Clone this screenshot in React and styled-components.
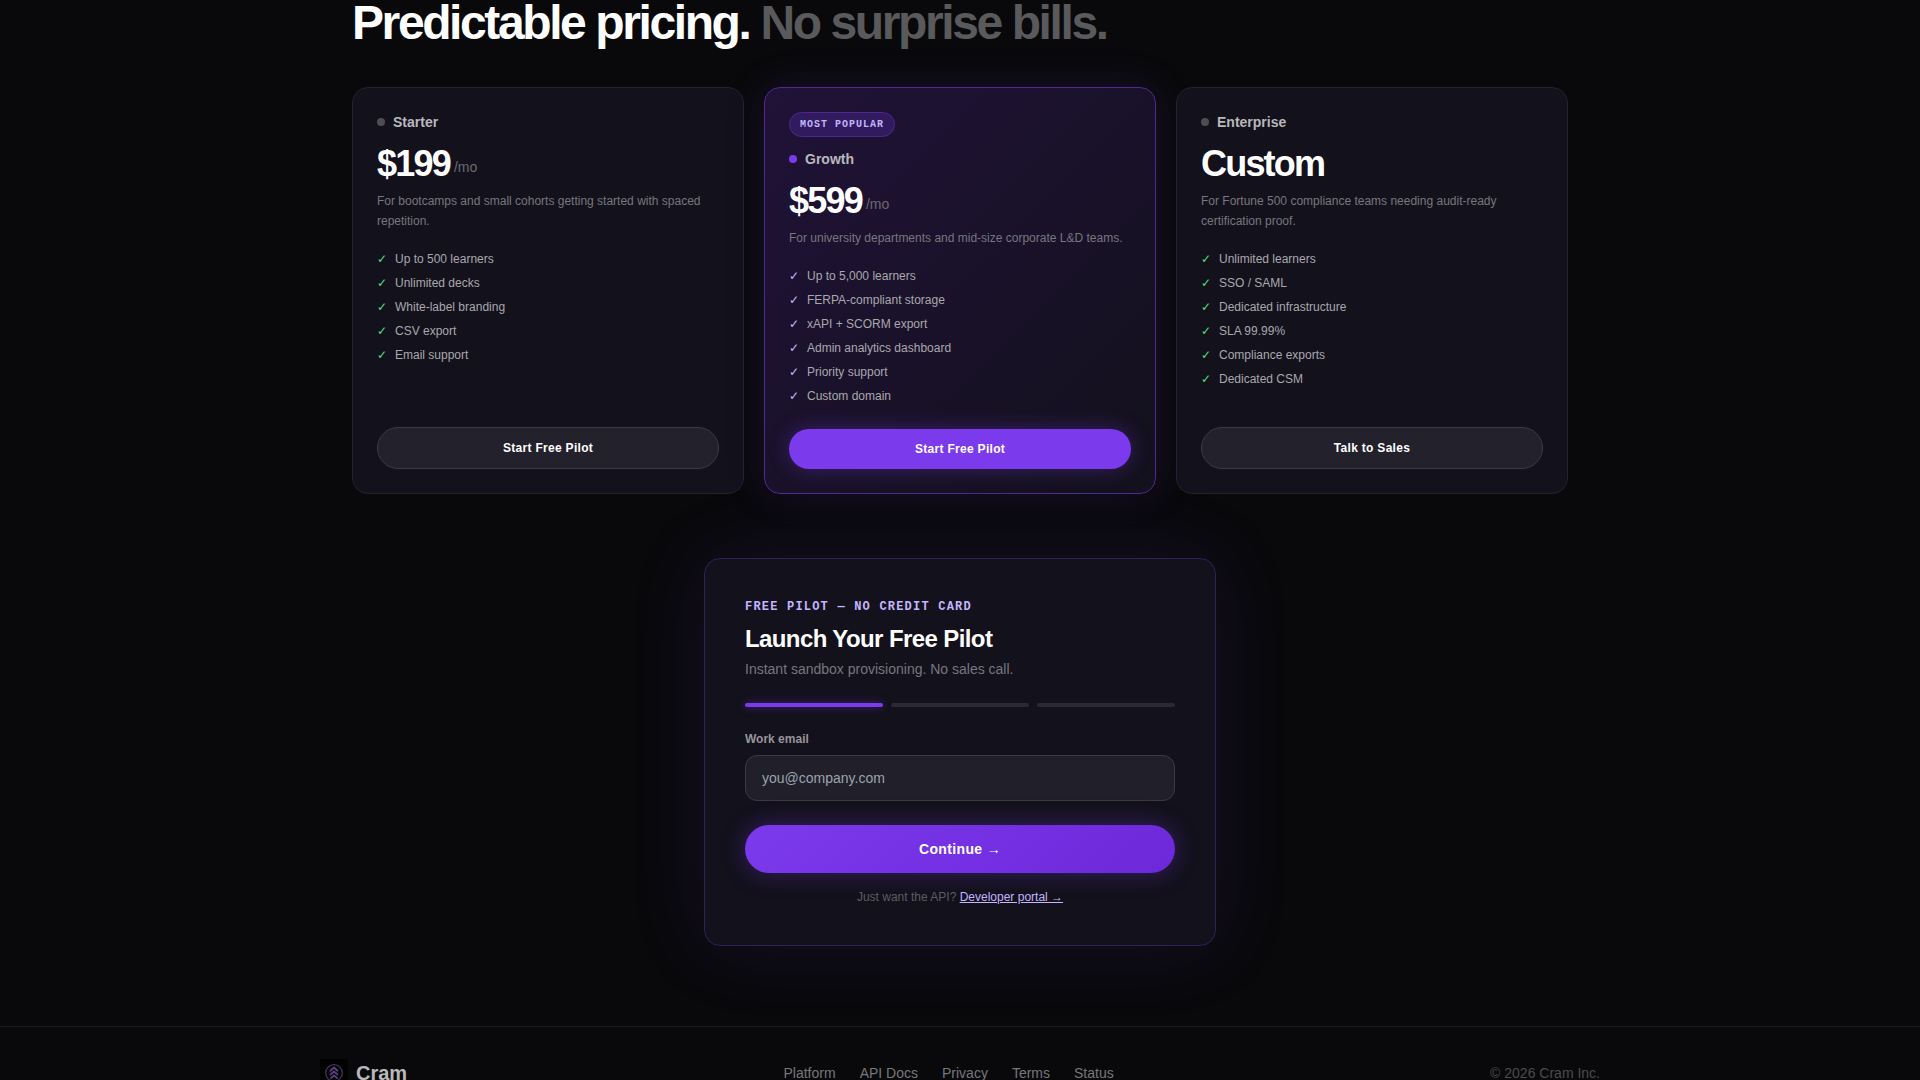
import React, { useState } from "react";
import styled, { createGlobalStyle } from "styled-components";

const GlobalStyle = createGlobalStyle`
  *, *::before, *::after {
    box-sizing: border-box;
  }

  html {
    scrollbar-width: none;
  }

  body {
    margin: 0;
    background: #09090b;
    color: #fff;
    font-family: "Liberation Sans", Arial, sans-serif;
    font-size: 14px;
    line-height: 1.5;
  }

  h1, h2, h3, p, ul {
    margin: 0;
    padding: 0;
  }
`;

// Pricing section
const PricingSection = styled.section`
  max-width: 1280px;
  margin: 0 auto;
  padding: 0 32px;
`;

const Heading = styled.h1`
  margin-bottom: 41px;
  font-size: 48px;
  font-weight: 700;
  line-height: 46px;
  letter-spacing: -0.05em;
`;

const Muted = styled.span`
  color: #5a5a5c;
`;

const PlanGrid = styled.div`
  display: grid;
  grid-template-columns: repeat(3, 1fr);
  gap: 20px;
`;

const PlanCard = styled.article`
  display: flex;
  flex-direction: column;
  padding: 24px;
  border-radius: 16px;
  border: 1px solid ${(props) => (props.$featured ? "#4f2a93" : "#24222c")};
  background: ${(props) =>
    props.$featured ? "linear-gradient(135deg, #201238 0%, #13111c 100%)" : "#13111c"};
  box-shadow: ${(props) => (props.$featured ? "0 0 40px rgba(124, 58, 237, 0.15)" : "none")};
`;

const Badge = styled.span`
  align-self: flex-start;
  margin-bottom: 12px;
  padding: 4px 10px;
  border: 1px solid #4b2889;
  border-radius: 999px;
  background: #321a5e;
  color: #c4b5fd;
  font-family: "Liberation Mono", monospace;
  font-size: 10px;
  font-weight: 700;
  line-height: 15px;
  letter-spacing: 0.1em;
`;

const PlanName = styled.h2`
  display: flex;
  align-items: center;
  gap: 8px;
  margin-bottom: 12px;
  color: #b9b8bb;
  font-size: 14px;
  line-height: 20px;
`;

const Dot = styled.span`
  width: 8px;
  height: 8px;
  border-radius: 50%;
  background: ${(props) => (props.$featured ? "#7c3aed" : "#4e4d55")};
`;

const Price = styled.div`
  display: flex;
  align-items: flex-end;
  gap: 4px;
  margin-bottom: 7px;
`;

const Amount = styled.span`
  font-size: 36px;
  font-weight: 700;
  line-height: 40px;
  letter-spacing: -0.05em;
`;

const Period = styled.span`
  padding-bottom: 6px;
  color: #6c6a72;
`;

const Description = styled.p`
  margin-bottom: 19px;
  color: #78767e;
  font-size: 12px;
  line-height: 20px;
`;

const FeatureList = styled.ul`
  display: flex;
  flex: 1;
  flex-direction: column;
  gap: 6px;
  margin-bottom: 24px;
  list-style: none;
`;

const Feature = styled.li`
  display: flex;
  gap: 8px;
  color: #a9a8ad;
  font-size: 12px;
  line-height: 18px;
`;

const Check = styled.span`
  color: ${(props) => (props.$featured ? "#c4b5fd" : "#4ade80")};
`;

const PlanButton = styled.button`
  padding: 11px 16px;
  border: ${(props) => (props.$featured ? "none" : "1px solid #3b3943")};
  border-radius: 999px;
  background: ${(props) => (props.$featured ? "#7c3aed" : "#23212b")};
  box-shadow: ${(props) => (props.$featured ? "0 0 20px rgba(124, 58, 237, 0.35)" : "none")};
  color: #fff;
  font-family: inherit;
  font-size: 12px;
  font-weight: 700;
  line-height: 18px;
  letter-spacing: 0.025em;
  cursor: pointer;
`;

// Pilot form
const PilotSection = styled.section`
  padding: 64px 32px 80px;
`;

const PilotCard = styled.form`
  max-width: 512px;
  margin: 0 auto;
  padding: 40px;
  border: 1px solid #2f2058;
  border-radius: 16px;
  background: #13111c;
  box-shadow: 0 0 80px rgba(124, 58, 237, 0.12);
`;

const Eyebrow = styled.p`
  margin-bottom: 8px;
  color: #c4b5fd;
  font-family: "Liberation Mono", monospace;
  font-size: 12px;
  font-weight: 700;
  line-height: 16px;
  letter-spacing: 0.1em;
`;

const PilotTitle = styled.h2`
  margin-bottom: 4px;
  font-size: 24px;
  line-height: 32px;
  letter-spacing: -0.025em;
`;

const PilotText = styled.p`
  margin-bottom: 24px;
  color: #78767e;
  line-height: 20px;
`;

const Steps = styled.div`
  display: flex;
  gap: 8px;
  margin-bottom: 24px;
`;

const Step = styled.span`
  flex: 1;
  height: 4px;
  border-radius: 999px;
  background: ${(props) => (props.$active ? "#7c3aed" : "#2b2932")};
  box-shadow: ${(props) => (props.$active ? "0 0 8px rgba(124, 58, 237, 0.5)" : "none")};
`;

const Label = styled.label`
  display: block;
  margin-bottom: 8px;
  color: #96959b;
  font-size: 12px;
  font-weight: 700;
  line-height: 16px;
`;

const Input = styled.input`
  display: block;
  width: 100%;
  height: 46px;
  margin-bottom: 24px;
  padding: 0 16px;
  border: 1px solid #3b3943;
  border-radius: 12px;
  background: #211f29;
  color: #fff;
  font-family: inherit;
  font-size: 14px;

  &::placeholder {
    color: #9ca3af;
  }

  &:focus {
    outline: none;
    border-color: #7c3aed;
  }
`;

const ContinueButton = styled.button`
  display: block;
  width: 100%;
  height: 48px;
  margin-bottom: 16px;
  border: none;
  border-radius: 999px;
  background: linear-gradient(135deg, #7c3aed, #6d28d9);
  box-shadow: 0 0 24px rgba(124, 58, 237, 0.35);
  color: #fff;
  font-family: inherit;
  font-size: 14px;
  font-weight: 700;
  letter-spacing: 0.025em;
  cursor: pointer;
`;

const PortalNote = styled.p`
  color: #5d5c63;
  font-size: 12px;
  line-height: 16px;
  text-align: center;

  a {
    color: #c4b5fd;
  }
`;

// Footer
const FooterBar = styled.footer`
  border-top: 1px solid #1c1c1e;
  padding: 32px;
`;

const FooterInner = styled.div`
  display: flex;
  align-items: center;
  justify-content: space-between;
  max-width: 1280px;
  margin: 0 auto;
`;

const Brand = styled.div`
  display: flex;
  align-items: center;
  gap: 8px;
  color: #b9b9ba;
  font-size: 20px;
  font-weight: 700;
  line-height: 28px;
`;

const FooterNav = styled.nav`
  display: flex;
  gap: 24px;

  a {
    color: #77777a;
    text-decoration: none;
  }
`;

const Copyright = styled.span`
  color: #4b4b4d;
`;

const plans = [
  {
    name: "Starter",
    price: "$199",
    period: "/mo",
    description: "For bootcamps and small cohorts getting started with spaced repetition.",
    features: ["Up to 500 learners", "Unlimited decks", "White-label branding", "CSV export", "Email support"],
    cta: "Start Free Pilot",
  },
  {
    name: "Growth",
    badge: "MOST POPULAR",
    price: "$599",
    period: "/mo",
    description: "For university departments and mid-size corporate L&D teams.",
    features: [
      "Up to 5,000 learners",
      "FERPA-compliant storage",
      "xAPI + SCORM export",
      "Admin analytics dashboard",
      "Priority support",
      "Custom domain",
    ],
    cta: "Start Free Pilot",
    featured: true,
  },
  {
    name: "Enterprise",
    price: "Custom",
    description: "For Fortune 500 compliance teams needing audit-ready certification proof.",
    features: [
      "Unlimited learners",
      "SSO / SAML",
      "Dedicated infrastructure",
      "SLA 99.99%",
      "Compliance exports",
      "Dedicated CSM",
    ],
    cta: "Talk to Sales",
  },
];

const footerLinks = ["Platform", "API Docs", "Privacy", "Terms", "Status"];

const Logo = () => (
  <svg width="28" height="28" viewBox="0 0 28 28" fill="none" aria-hidden="true">
    <rect width="28" height="28" fill="#020203" />
    <circle cx="14" cy="14" r="8.3" stroke="#43335f" strokeWidth="1.3" />
    <path
      d="M10 12.2 14 8.500l4 3.700M10 16l4-3.500 4 3.500M10.500 19.500l3.500-3 3.500 3"
      stroke="#573f7c"
      strokeWidth="2"
    />
  </svg>
);

const Plan = ({ plan }) => (
  <PlanCard $featured={plan.featured}>
    {plan.badge && <Badge>{plan.badge}</Badge>}
    <PlanName>
      <Dot $featured={plan.featured} />
      {plan.name}
    </PlanName>
    <Price>
      <Amount>{plan.price}</Amount>
      {plan.period && <Period>{plan.period}</Period>}
    </Price>
    <Description>{plan.description}</Description>
    <FeatureList>
      {plan.features.map((feature) => (
        <Feature key={feature}>
          <Check $featured={plan.featured}>✓</Check>
          {feature}
        </Feature>
      ))}
    </FeatureList>
    <PlanButton type="button" $featured={plan.featured}>
      {plan.cta}
    </PlanButton>
  </PlanCard>
);

const App = () => {
  const [step, setStep] = useState(0);
  const [email, setEmail] = useState("");

  // Move on to the next step of the pilot form
  const handleSubmit = (e) => {
    e.preventDefault();
    setStep(Math.min(step + 1, 2));
  };

  return (
    <>
      <GlobalStyle />
      <main>
        <PricingSection>
          <Heading>
            Predictable pricing. <Muted>No surprise bills.</Muted>
          </Heading>
          <PlanGrid>
            {plans.map((plan) => (
              <Plan key={plan.name} plan={plan} />
            ))}
          </PlanGrid>
        </PricingSection>

        <PilotSection>
          <PilotCard onSubmit={handleSubmit}>
            <Eyebrow>FREE PILOT — NO CREDIT CARD</Eyebrow>
            <PilotTitle>Launch Your Free Pilot</PilotTitle>
            <PilotText>Instant sandbox provisioning. No sales call.</PilotText>
            <Steps>
              {[0, 1, 2].map((n) => (
                <Step key={n} $active={n <= step} />
              ))}
            </Steps>
            <Label htmlFor="email">Work email</Label>
            <Input
              id="email"
              type="email"
              placeholder="you@company.com"
              value={email}
              onChange={(e) => setEmail(e.target.value)}
            />
            <ContinueButton type="submit">Continue →</ContinueButton>
            <PortalNote>
              Just want the API? <a href="#developers">Developer portal →</a>
            </PortalNote>
          </PilotCard>
        </PilotSection>
      </main>

      <FooterBar>
        <FooterInner>
          <Brand>
            <Logo />
            Cram
          </Brand>
          <FooterNav>
            {footerLinks.map((link) => (
              <a key={link} href={`#${link}`}>
                {link}
              </a>
            ))}
          </FooterNav>
          <Copyright>© 2026 Cram Inc.</Copyright>
        </FooterInner>
      </FooterBar>
    </>
  );
};

export default App;
